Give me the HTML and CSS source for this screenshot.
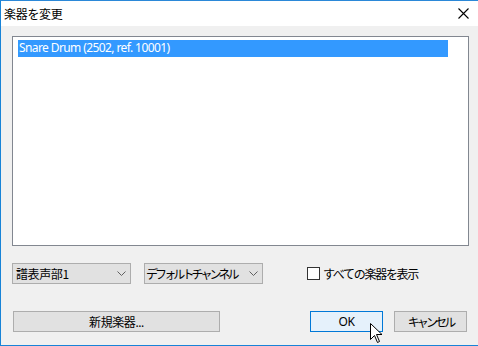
FILE: index.html
```html
<!DOCTYPE html>
<html>

<head>
    <meta charset="UTF-8">
    <title>楽器を変更</title>
    <link rel="stylesheet" href="styles.css">
</head>

<body>
    <div class="window">
        <div class="titlebar">
            <span class="title">楽器を変更</span>
            <svg class="close" width="11" height="11" viewBox="0 0 11 11">
                <path d="M0.5 0.5 L10.5 10.5 M10.5 0.5 L0.5 10.5" stroke="#000" stroke-width="1.1" fill="none"/>
            </svg>
        </div>

        <div class="content">
            <div class="listbox">
                <div class="item selected">Snare Drum (2502, ref. 10001)</div>
            </div>

            <div class="row options">
                <div class="combo">
                    <span>譜表声部1</span>
                    <svg class="chevron" width="9" height="5" viewBox="0 0 9 5">
                        <path d="M0.5 0.5 L4.5 4.5 L8.5 0.5" stroke="#606060" fill="none"/>
                    </svg>
                </div>
                <div class="combo">
                    <span class="kana">デフォルトチャンネル</span>
                    <svg class="chevron" width="9" height="5" viewBox="0 0 9 5">
                        <path d="M0.5 0.5 L4.5 4.5 L8.5 0.5" stroke="#606060" fill="none"/>
                    </svg>
                </div>
                <label class="check">
                    <span class="box"></span>
                    <span>すべての楽器を表示</span>
                </label>
            </div>

            <div class="row buttons">
                <div class="btn wide">新規楽器...</div>
                <div class="btn default">OK</div>
                <div class="btn"><span class="kana">キャンセル</span></div>
            </div>
        </div>

        <!-- マウスカーソル -->
        <svg class="cursor" width="13" height="21" viewBox="0 0 13 21">
            <path d="M0.5 0.5 L0.5 16.5 L4.5 12.5 L7.5 19.5 L9.5 18.5 L6.5 11.5 L12 11.5 Z" fill="#fff" stroke="#000" stroke-width="1"/>
        </svg>
    </div>
</body>

</html>
```

FILE: styles.css
```css
* {
    box-sizing: border-box;
    margin: 0;
    padding: 0;
}

body {
    width: 478px;
    height: 346px;
    overflow: hidden;
    font-family: 'Noto Sans', 'Noto Sans CJK JP', sans-serif;
    font-size: 12px;
    color: #000;
    background: #f0f0f0;
    white-space: nowrap;
}

.window {
    position: relative;
    width: 478px;
    height: 346px;
    background: #f0f0f0;
    border-top: 1px solid #2b88d8;
    border-left: 1px solid #1883d7;
    border-bottom: 1px solid #1883d7;
}

.titlebar {
    height: 25px;
    background: #fff;
    display: flex;
    align-items: center;
    justify-content: space-between;
    padding: 0 9px 1px 3px;
}

.title {
    font-family: 'Noto Sans CJK JP', sans-serif;
    font-size: 12px;
    letter-spacing: -0.3px;
}

.close {
    display: block;
    margin-top: 1px;
}

.content {
    padding: 10px 9px 0 11px;
}

.listbox {
    height: 210px;
    background: #fff;
    border: 1px solid #828790;
    padding: 3px 20px 0 5px;
}

.item {
    height: 17px;
    line-height: 16px;
    padding-left: 1px;
    font-size: 12px;
    letter-spacing: -0.6px;
}

.selected {
    background: #3399ff;
    color: #fff;
}

.row {
    display: flex;
    align-items: center;
}

.options {
    margin-top: 17px;
    height: 21px;
}

.combo {
    width: 119px;
    height: 21px;
    background: #e1e1e1;
    border: 1px solid #adadad;
    display: flex;
    align-items: center;
    justify-content: space-between;
    padding: 0 4px 0 3px;
    font-family: 'Noto Sans CJK JP', sans-serif;
    letter-spacing: -0.4px;
}

.combo + .combo {
    margin-left: 13px;
    padding-left: 1px;
}

.kana {
    letter-spacing: -2.9px;
}

.chevron {
    display: block;
}

.check {
    display: flex;
    align-items: center;
    margin-left: 44px;
    font-family: 'Noto Sans CJK JP', sans-serif;
    letter-spacing: -1.3px;
}

.box {
    width: 13px;
    height: 13px;
    background: #fff;
    border: 1px solid #333;
    margin-right: 3px;
}

.buttons {
    margin-top: 27px;
}

.btn {
    width: 73px;
    height: 21px;
    background: #e1e1e1;
    border: 1px solid #adadad;
    display: flex;
    align-items: center;
    justify-content: center;
    font-family: 'Noto Sans', 'Noto Sans CJK JP', sans-serif;
    letter-spacing: -0.4px;
}

.wide {
    width: 207px;
    margin-left: 1px;
    margin-right: 90px;
}

.default {
    background: #e5f1fb;
    border-color: #0078d7;
    margin-right: 11px;
}

.cursor {
    position: absolute;
    left: 369px;
    top: 322px;
}
```
